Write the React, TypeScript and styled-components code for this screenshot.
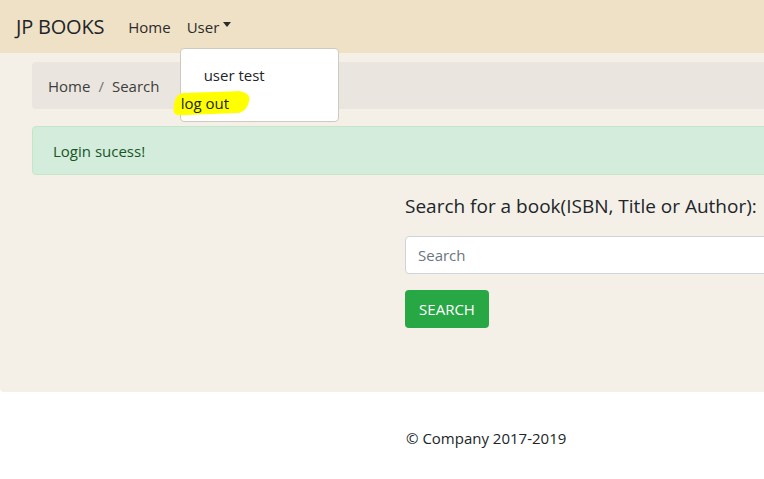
import React from 'react';
import styled, { createGlobalStyle } from 'styled-components';

const GlobalStyle = createGlobalStyle`
  html, body {
    margin: 0;
    padding: 0;
    background: #ffffff;
    overflow: hidden;
  }
  body {
    font-family: 'Open Sans', 'Noto Sans', sans-serif;
    color: #212529;
    font-size: 15px;
  }
`;

const Page = styled.div`
  width: 1100px;
`;

const Navbar = styled.nav`
  height: 53px;
  background: #efe1c6;
  display: flex;
  align-items: center;
  padding: 0 16px;
`;

const Brand = styled.a`
  font-size: 20px;
  color: #212529;
  margin-right: 16px;
  letter-spacing: -0.2px;
`;

const NavItem = styled.div`
  position: relative;
  padding: 0 8px;
  font-size: 15px;
  color: #2b2b2b;
  display: flex;
  align-items: center;
`;

const Caret = styled.span`
  display: inline-block;
  margin-left: 4px;
  border-top: 5px solid #2b2b2b;
  border-left: 4px solid transparent;
  border-right: 4px solid transparent;
  transform: translateY(-2px);
`;

const Dropdown = styled.div`
  position: absolute;
  left: 1px;
  top: 31px;
  width: 159px;
  height: 74px;
  background: #ffffff;
  border: 1px solid #cfcac0;
  border-radius: 4px;
  box-sizing: border-box;
  z-index: 2;
  display: flex;
  flex-direction: column;
  padding-top: 12px;
`;

const DropItem = styled.div<{ $indent?: boolean }>`
  font-size: 15px;
  color: #212529;
  padding-left: ${p => (p.$indent ? '23px' : '0')};
  height: 28px;
  line-height: 28px;
  position: relative;
`;

const Marker = styled.span`
  position: relative;
  display: inline-block;
  z-index: 0;
  &::before {
    content: '';
    position: absolute;
    left: -7px;
    top: 3px;
    width: 75px;
    height: 22px;
    background: #ffff00;
    border-radius: 8px 14px 10px 6px / 10px 8px 12px 6px;
    transform: rotate(-2deg) skewX(-8deg);
    z-index: -1;
  }
`;

const Main = styled.main`
  background: #f4f0e8;
  height: 339px;
  border-radius: 0 0 4px 4px;
  padding: 9px 0 0 32px;
  box-sizing: border-box;
`;

const Breadcrumb = styled.div`
  height: 47px;
  background: #eae6df;
  border-radius: 4px;
  display: flex;
  align-items: center;
  padding: 0 16px;
  font-size: 15px;
  color: #3d3d3d;
`;

const Sep = styled.span`
  padding: 0 8px;
  color: #6c757d;
`;

const Alert = styled.div`
  margin-top: 17px;
  height: 49px;
  box-sizing: border-box;
  background: #d4ecdb;
  border: 1px solid #c3e6cb;
  border-radius: 4px;
  color: #155724;
  display: flex;
  align-items: center;
  padding-left: 20px;
  font-size: 15px;
`;

const SearchBox = styled.section`
  margin-left: 373px;
  margin-top: 16px;
  display: flex;
  flex-direction: column;
`;

const Heading = styled.h2`
  margin: 0;
  font-size: 19px;
  font-weight: 400;
  height: 30px;
  line-height: 30px;
  color: #212529;
`;

const Input = styled.input`
  margin-top: 15px;
  height: 38px;
  box-sizing: border-box;
  border: 1px solid #ced4da;
  border-radius: 4px;
  padding: 0 12px;
  font-family: inherit;
  font-size: 15px;
  background: #fff;
  &::placeholder {
    color: #6c757d;
  }
`;

const Button = styled.button`
  margin-top: 16px;
  width: 84px;
  height: 38px;
  background: #28a745;
  color: #ffffff;
  border: none;
  border-radius: 4px;
  font-family: inherit;
  font-size: 15px;
`;

const Footer = styled.footer`
  padding: 36px 0 0 406px;
  font-size: 15px;
  color: #212529;
`;

export default function App() {
  return (
    <>
      <GlobalStyle />
      <Page>
        <Navbar>
          <Brand>JP BOOKS</Brand>
          <NavItem>Home</NavItem>
          <NavItem>
            User
            <Caret />
            <Dropdown>
              <DropItem $indent>user test</DropItem>
              <DropItem>
                <Marker>log out</Marker>
              </DropItem>
            </Dropdown>
          </NavItem>
        </Navbar>
        <Main>
          <Breadcrumb>
            Home<Sep>/</Sep>Search
          </Breadcrumb>
          <Alert>Login sucess!</Alert>
          <SearchBox>
            <Heading>Search for a book(ISBN, Title or Author):</Heading>
            <Input placeholder="Search" />
            <Button>SEARCH</Button>
          </SearchBox>
        </Main>
        <Footer>© Company 2017-2019</Footer>
      </Page>
    </>
  );
}
